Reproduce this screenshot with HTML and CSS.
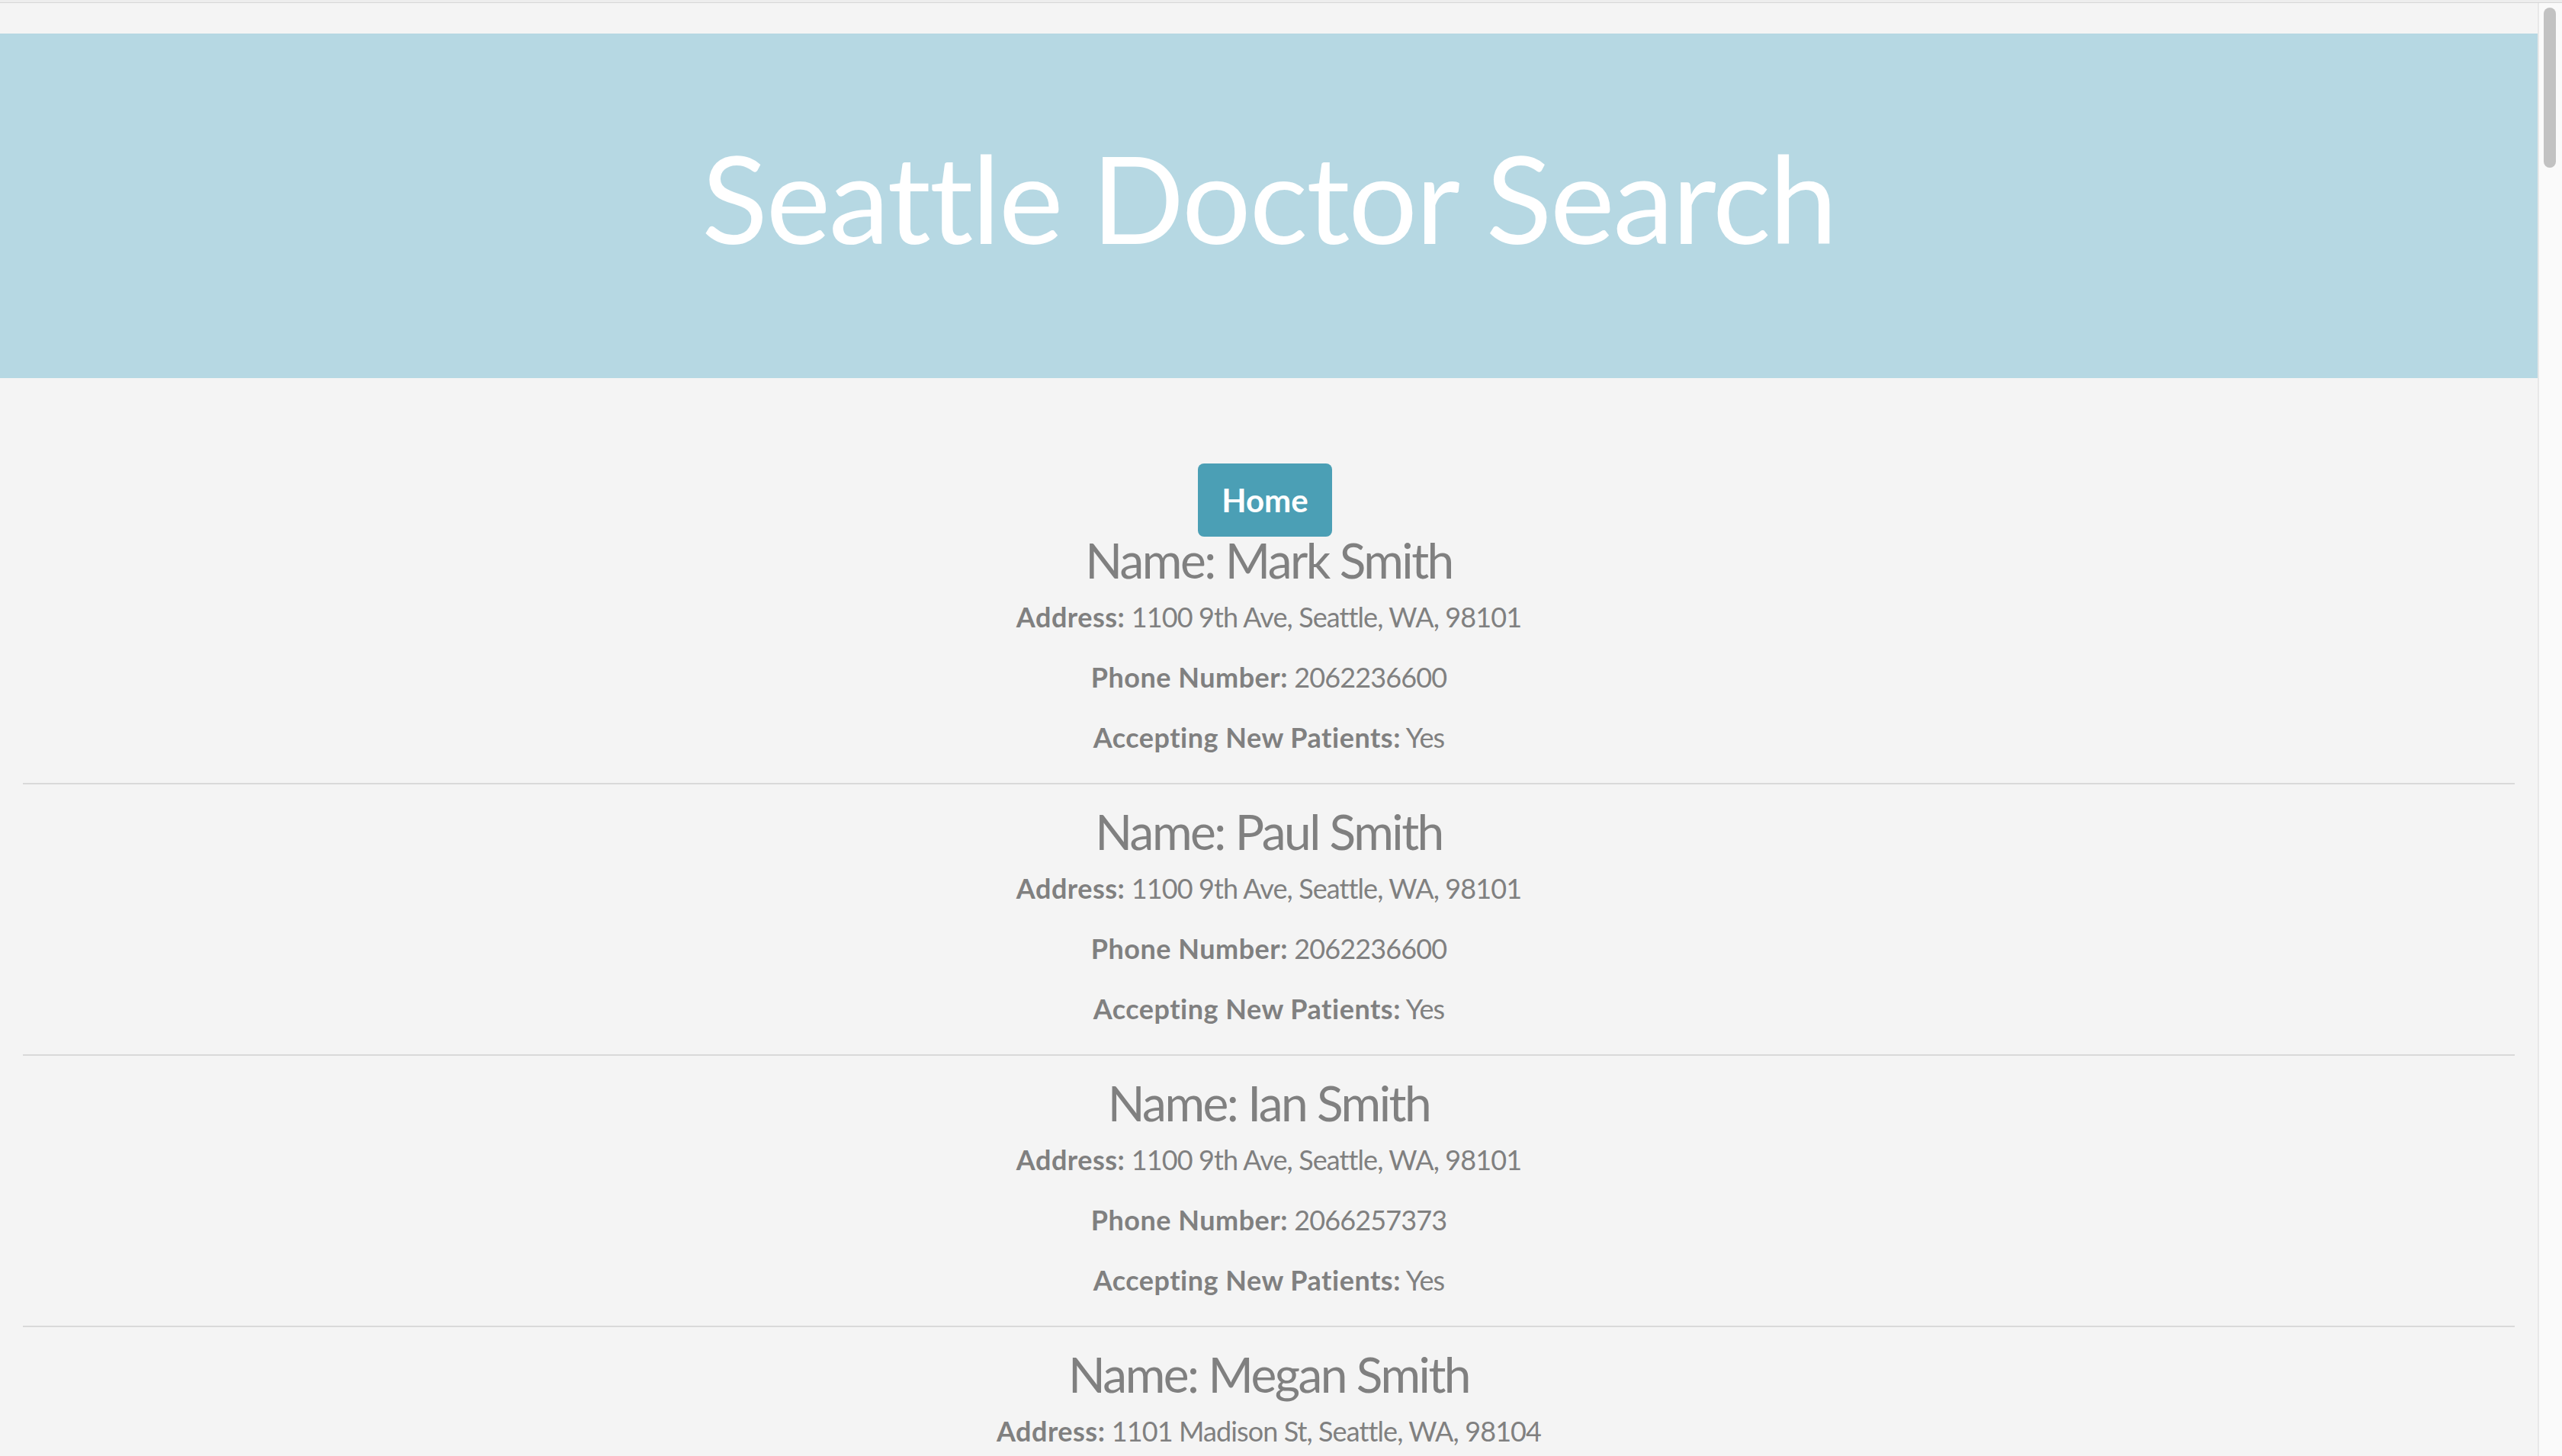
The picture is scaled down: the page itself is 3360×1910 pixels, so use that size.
FILE: index.html
```html
<!DOCTYPE html>
<html lang="en">
<head>
<meta charset="utf-8">
<title>Seattle Doctor Search</title>
<link rel="stylesheet" href="styles.css">
</head>
<body>
<div class="window-edge"></div>
<div class="window">
  <div class="page">
    <header class="banner">
      <h1 class="title">Seattle Doctor Search</h1>
    </header>
    <main class="content">
      <nav class="nav"><a class="btn" href="#">Home</a></nav>

      <section class="doctor">
        <h2 class="doctor-name">Name: Mark Smith</h2>
        <p class="field"><strong>Address:</strong> 1100 9th Ave, Seattle, WA, 98101</p>
        <p class="field"><strong>Phone Number:</strong> 2062236600</p>
        <p class="field"><strong>Accepting New Patients:</strong> Yes</p>
      </section>
      <hr class="divider">

      <section class="doctor">
        <h2 class="doctor-name">Name: Paul Smith</h2>
        <p class="field"><strong>Address:</strong> 1100 9th Ave, Seattle, WA, 98101</p>
        <p class="field"><strong>Phone Number:</strong> 2062236600</p>
        <p class="field"><strong>Accepting New Patients:</strong> Yes</p>
      </section>
      <hr class="divider">

      <section class="doctor">
        <h2 class="doctor-name">Name: Ian Smith</h2>
        <p class="field"><strong>Address:</strong> 1100 9th Ave, Seattle, WA, 98101</p>
        <p class="field"><strong>Phone Number:</strong> 2066257373</p>
        <p class="field"><strong>Accepting New Patients:</strong> Yes</p>
      </section>
      <hr class="divider">

      <section class="doctor">
        <h2 class="doctor-name">Name: Megan Smith</h2>
        <p class="field"><strong>Address:</strong> 1101 Madison St, Seattle, WA, 98104</p>
      </section>
    </main>
  </div>
  <div class="scrollbar"><div class="thumb"></div></div>
</div>
</body>
</html>
```

FILE: styles.css
```css
html, body {
  margin: 0;
  padding: 0;
  height: 1910px;
  overflow: hidden;
  background: #f4f4f4;
}

body {
  font-family: Lato, "Open Sans", sans-serif;
  color: #808080;
}

.window-edge {
  height: 3px;
  background: #ededed;
  border-bottom: 1px solid #d6d6d6;
}

.window {
  display: flex;
  height: 1906px;
}

.page {
  flex: 1;
  min-width: 0;
  background: #f4f4f4;
  padding-top: 40px;
}

.scrollbar {
  width: 22px;
  padding: 6px 4px 0 4px;
  background: #fafafa;
  border-left: 2px solid #e8e8e8;
}

.thumb {
  width: 16px;
  height: 210px;
  margin-left: 2px;
  border-radius: 8px;
  background: #c2c2c2;
}

.banner {
  height: 452px;
  box-sizing: border-box;
  padding-bottom: 24px;
  background: #b6d8e3;
  display: flex;
  align-items: center;
  justify-content: center;
}

.title {
  margin: 0;
  font-size: 160px;
  line-height: 180px;
  font-weight: 400;
  color: #ffffff;
  letter-spacing: -2px;
}

.content {
  padding-top: 112px;
  text-align: center;
}

.nav {
  display: flex;
  justify-content: center;
}

.btn {
  width: 176px;
  height: 96px;
  margin-right: 10px;
  display: flex;
  align-items: center;
  justify-content: center;
  border-radius: 8px;
  background: #4b9fb5;
  color: #ffffff;
  text-decoration: none;
  font-size: 42px;
  font-weight: 700;
}

.doctor {
  padding-bottom: 38px;
}

.doctor-name {
  margin: 0 0 21px;
  font-size: 64px;
  line-height: 62px;
  font-weight: 400;
  letter-spacing: -2.5px;
}

.field {
  margin: 0;
  font-size: 36px;
  line-height: 44px;
  letter-spacing: -0.9px;
}

.field + .field {
  margin-top: 35px;
}

.field strong {
  font-weight: 700;
  letter-spacing: 0.5px;
}

.divider {
  margin: 0 30px 31px;
  height: 2px;
  border: 0;
  background: #d9d9d9;
}
```
